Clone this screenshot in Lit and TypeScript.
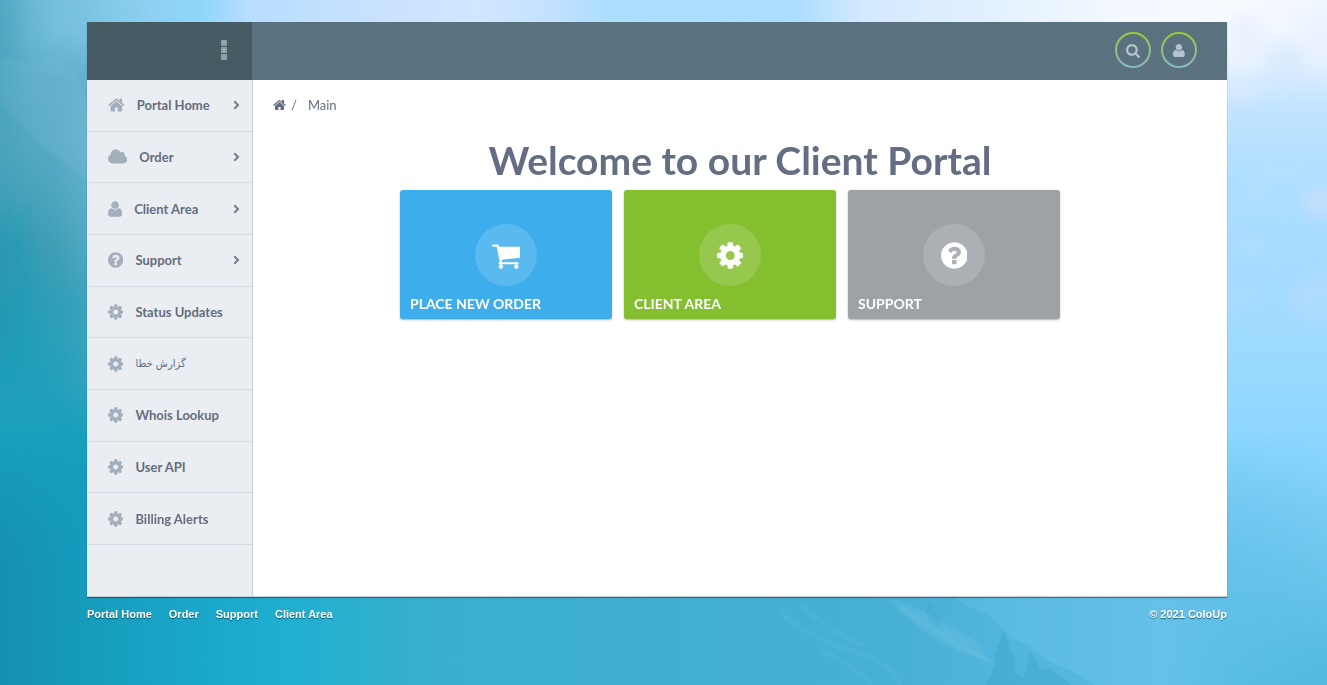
import { LitElement, html, css, svg } from "lit";
import { customElement } from "lit/decorators.js";

interface Glyph {
  box: string;
  ratio: number;
  path: string;
}

const glyph = (x: number, width: number, path: string): Glyph => ({
  box: `${x} 0 ${width} 1792`,
  ratio: width / 1792,
  path,
});

const GLYPHS: Record<string, Glyph> = {
  home: glyph(64, 1664, "M1472 992v480q0 26-19 45t-45 19h-384v-384h-256v384h-384q-26 0-45-19t-19-45v-480q0-1 .5-3t.5-3l575-474 575 474q1 2 1 6zm223-69l-62 74q-8 9-21 11h-3q-13 0-21-7l-692-577-692 577q-12 8-24 7-13-2-21-11l-62-74q-8-10-7-23.5t11-21.5l719-599q32-26 76-26t76 26l244 204v-195q0-14 9-23t23-9h192q14 0 23 9t9 23v408l219 182q10 8 11 21.5t-7 23.5z"),
  cloud: glyph(64, 1920, "M1984 1152q0 159-112.5 271.5t-271.5 112.5h-1088q-185 0-316.5-131.5t-131.5-316.5q0-132 71-241.5t187-163.5q-2-28-2-43 0-212 150-362t362-150q158 0 286.5 88t187.5 230q70-62 166-62 106 0 181 75t75 181q0 75-41 138 129 30 213 134.5t84 239.5z"),
  user: glyph(192, 1408, "M1600 1405q0 120-73 189.5t-194 69.5h-874q-121 0-194-69.5t-73-189.5q0-53 3.5-103.5t14-109 26.5-108.5 43-97.5 62-81 85.5-53.5 111.5-20q9 0 42 21.5t74.5 48 108 48 133.5 21.5 133.5-21.5 108-48 74.5-48 42-21.5q61 0 111.5 20t85.5 53.5 62 81 43 97.5 26.5 108.5 14 109 3.5 103.5zm-320-893q0 159-112.5 271.5t-271.5 112.5-271.5-112.5-112.5-271.5 112.5-271.5 271.5-112.5 271.5 112.5 112.5 271.5z"),
  question: glyph(128, 1536, "M1024 1376v-192q0-14-9-23t-23-9h-192q-14 0-23 9t-9 23v192q0 14 9 23t23 9h192q14 0 23-9t9-23zm256-672q0-88-55.5-163t-138.5-116-170-41q-243 0-371 213-15 24 8 42l132 100q7 6 19 6 16 0 25-12 53-68 86-92 34-24 86-24 48 0 85.5 26t37.5 59q0 38-20 61t-68 45q-63 28-115.5 86.5t-52.5 125.5v36q0 14 9 23t23 9h192q14 0 23-9t9-23q0-19 21.5-49.5t54.5-49.5q32-18 49-28.5t46-35 44.5-48 28-60.5 12.5-81zm384 192q0 209-103 385.5t-279.5 279.5-385.5 103-385.5-103-279.5-279.5-103-385.5 103-385.5 279.5-279.5 385.5-103 385.5 103 279.5 279.5 103 385.5z"),
  cog: glyph(128, 1536, "M1152 896q0-106-75-181t-181-75-181 75-75 181 75 181 181 75 181-75 75-181zm512-109v222q0 12-8 23t-20 13l-185 28q-19 54-39 91 35 50 107 138 10 12 10 25t-9 23q-27 37-99 108t-94 71q-12 0-26-9l-138-108q-44 23-91 38-16 136-29 186-7 28-36 28h-222q-14 0-24.5-8.5t-11.5-21.5l-28-184q-49-16-90-37l-141 107q-10 9-25 9-14 0-25-11-126-114-165-168-7-10-7-23 0-12 8-23 15-21 51-66.5t54-70.5q-27-50-41-99l-183-27q-13-2-21-12.5t-8-23.5v-222q0-12 8-23t19-13l186-28q14-46 39-92-40-57-107-138-10-12-10-24 0-10 9-23 26-36 98.5-107.5t94.5-71.5q13 0 26 10l138 107q44-23 91-38 16-136 29-186 7-28 36-28h222q14 0 24.5 8.5t11.5 21.5l28 184q49 16 90 37l142-107q9-9 24-9 13 0 25 10 129 119 165 170 7 8 7 22 0 12-8 23-15 21-51 66.5t-54 70.5q26 50 41 98l183 28q13 2 21 12.5t8 23.5z"),
  cart: glyph(64, 1664, "M704 1536q0 52-38 90t-90 38-90-38-38-90 38-90 90-38 90 38 38 90zm896 0q0 52-38 90t-90 38-90-38-38-90 38-90 90-38 90 38 38 90zm128-1088v512q0 24-16.5 42.5t-40.5 21.5l-1044 122q13 60 13 70 0 16-24 64h920q26 0 45 19t19 45-19 45-45 19h-1024q-26 0-45-19t-19-45q0-11 8-31.5t16-36 21.5-40 15.5-29.5l-177-823h-204q-26 0-45-19t-19-45 19-45 45-19h256q16 0 28.5 6.5t19.5 15.5 13 24.5 8 26 5.5 29.5 4.5 26h1201q26 0 45 19t19 45z"),
  search: glyph(64, 1664, "M1216 832q0-185-131.5-316.5t-316.5-131.5-316.5 131.5-131.5 316.5 131.5 316.5 316.5 131.5 316.5-131.5 131.5-316.5zm512 832q0 52-38 90t-90 38q-54 0-90-38l-343-342q-179 124-399 124-143 0-273.5-55.5t-225-150-150-225-55.5-273.5 55.5-273.5 150-225 225-150 273.5-55.5 273.5 55.5 225 150 150 225 55.5 273.5q0 220-124 399l343 343q37 37 37 90z"),
};

const icon = (name: string, size: number) => {
  const g = GLYPHS[name];
  return html`<svg class="icon" viewBox=${g.box} width=${g.ratio * size} height=${size} aria-hidden="true">
    <path d=${g.path}></path>
  </svg>`;
};

@customElement("sky-backdrop")
export class SkyBackdrop extends LitElement {
  static styles = css`
    :host { display: block; overflow: hidden; }
    .sky { display: block; width: 100%; height: 100%; }
  `;

  private stops(list: [number, string, number?][]) {
    return list.map(([o, c, a]) => svg`<stop offset=${o} stop-color=${c} stop-opacity=${a ?? 1}></stop>`);
  }

  render() {
    return html`
      <svg class="sky" viewBox="0 0 1327 685" preserveAspectRatio="none" aria-hidden="true">
        <defs>
          <linearGradient id="base" x2="0" y2="1">
            ${this.stops([[0, "#f2f8ff"], [0.09, "#e3f1ff"], [0.15, "#c3e4ff"], [0.27, "#addeff"], [0.48, "#a0daff"], [0.64, "#8cd7ff"], [0.74, "#7bcdf5"], [0.86, "#67c3e9"], [1, "#52b9e0"]])}
          </linearGradient>
          <linearGradient id="left" x2="0" y2="1">
            ${this.stops([[0, "#65b4d1"], [0.2, "#57aac5"], [0.36, "#3b9db5"], [0.5, "#279fb9"], [0.64, "#19a0be"], [0.8, "#169bbc"], [1, "#1597b9"]])}
          </linearGradient>
          <linearGradient id="leftFade">
            ${this.stops([[0, "#ffffff"], [0.35, "#ffffff"], [0.95, "#ffffff", 0]])}
          </linearGradient>
          <mask id="leftMask"><rect width="260" height="685" fill="url(#leftFade)"></rect></mask>
          <linearGradient id="ground">
            ${this.stops([[0, "#1590b4"], [0.07, "#169cbd"], [0.16, "#1aa9cb"], [0.22, "#20afd0"], [0.33, "#3aafcd"], [0.5, "#40afd1"], [0.66, "#4bb3d7"], [0.76, "#5cbbe2"], [0.88, "#64c1e9"], [1, "#5bbfe6", 0]])}
          </linearGradient>
          <linearGradient id="groundFade" x2="0" y2="1">
            ${this.stops([[0, "#ffffff", 0], [0.55, "#ffffff"]])}
          </linearGradient>
          <mask id="groundMask"><rect y="430" width="1327" height="255" fill="url(#groundFade)"></rect></mask>
          <linearGradient id="top">
            ${this.stops([[0, "#8fd2f2", 0], [0.06, "#82c9e8", 0.7], [0.15, "#8fd5fb"], [0.19, "#b9deff"], [0.28, "#c8e1ff"], [0.36, "#d1e6ff"], [0.42, "#c1e1ff"], [0.46, "#abdeff"], [0.6, "#abddff"], [0.65, "#d3e9ff"], [0.75, "#e3f1ff"], [0.84, "#f3f8ff"], [0.94, "#f9faff", 0.8], [1, "#eef5ff", 0.5]])}
          </linearGradient>
          <linearGradient id="topFade" x2="0" y2="1">
            ${this.stops([[0, "#ffffff"], [0.4, "#ffffff"], [1, "#ffffff", 0]])}
          </linearGradient>
          <mask id="topMask"><rect width="1327" height="80" fill="url(#topFade)"></rect></mask>
          <linearGradient id="slope">
            ${this.stops([[0, "#2c9ec8", 0], [0.6, "#2c9ec8"], [1, "#2c9ec8"]])}
          </linearGradient>
          <filter id="soft" x="-50%" y="-50%" width="200%" height="200%"><feGaussianBlur stdDeviation="7"></feGaussianBlur></filter>
          <filter id="haze" x="-80%" y="-50%" width="260%" height="200%"><feGaussianBlur stdDeviation="18"></feGaussianBlur></filter>
          <filter id="veil" x="-20%" y="-20%" width="140%" height="140%"><feGaussianBlur stdDeviation="1.5"></feGaussianBlur></filter>
        </defs>
        <rect width="1327" height="685" fill="url(#base)"></rect>
        <rect width="260" height="685" fill="url(#left)" mask="url(#leftMask)"></rect>
        <rect width="1327" height="80" fill="url(#top)" mask="url(#topMask)"></rect>
        <g filter="url(#haze)">
          <ellipse cx="-4" cy="60" rx="16" ry="170" fill="#3898b2" opacity="0.7"></ellipse>
          <ellipse cx="-6" cy="290" rx="24" ry="90" fill="#0d93ad" opacity="0.6"></ellipse>
          <ellipse cx="96" cy="180" rx="28" ry="120" fill="#82c1e0" opacity="0.4"></ellipse>
          <ellipse cx="96" cy="350" rx="22" ry="60" fill="#5fadca" opacity="0.4"></ellipse>
        </g>
        <path d="M0 56Q22 66 44 60T82 84L90 118V180Q40 150 0 100Z" fill="#8bc6e2" opacity="0.14" filter="url(#veil)"></path>
        <rect y="430" width="1327" height="255" fill="url(#ground)" mask="url(#groundMask)"></rect>
        <g filter="url(#soft)" fill="#e9f0ff">
          <ellipse cx="1246" cy="36" rx="20" ry="24" opacity="0.8"></ellipse>
          <ellipse cx="1320" cy="44" rx="14" ry="18" opacity="0.7"></ellipse>
          <ellipse cx="1284" cy="62" rx="22" ry="20" fill="#cfe6fd" opacity="0.5"></ellipse>
          <ellipse cx="1240" cy="92" rx="24" ry="10" opacity="0.4"></ellipse>
          <ellipse cx="1280" cy="172" rx="34" ry="6" fill="#bcdffd" opacity="0.7"></ellipse>
          <ellipse cx="1256" cy="192" rx="10" ry="8" fill="#c4e0fd" opacity="0.7"></ellipse>
          <ellipse cx="1322" cy="202" rx="22" ry="16" fill="#c4dffd" opacity="0.9"></ellipse>
          <ellipse cx="1252" cy="248" rx="12" ry="5" fill="#bfe0fd" opacity="0.7"></ellipse>
          <ellipse cx="1322" cy="298" rx="34" ry="26" fill="#b0dbff" opacity="0.8"></ellipse>
          <ellipse cx="1238" cy="296" rx="24" ry="14" fill="#acdcff" opacity="0.6"></ellipse>
          <ellipse cx="1270" cy="424" rx="44" ry="8" fill="#93d9ff" opacity="0.5"></ellipse>
        </g>
        <path d="M700 590H945L968 607L988 614L1012 638L1030 646L1050 662L1072 671L1096 685H700Z" fill="url(#slope)" opacity="0.2"></path>
        <path d="M885 597L925 612L948 626L975 640L990 662L960 652L925 632Z" fill="#9ed8ee" opacity="0.16" filter="url(#veil)"></path>
        <path d="M1003 631L1006 638L1009 642L1011 652L1015 660L1014 672L1024 678L1030 652L1036 658L1040 670L1050 668L1072 685H986L996 664L994 656L998 646Z" fill="#2a98c0" opacity="0.22"></path>
        <path d="M931 602L935 612L942 624L938 628L930 620L926 612Z" fill="#2a98c0" opacity="0.12"></path>
        <path d="M780 612Q812 640 850 650T900 685M800 605Q830 632 866 646M820 650Q850 662 872 685M900 608Q940 635 990 662" fill="none" stroke="#86cde6" stroke-width="3" opacity="0.16" filter="url(#veil)"></path>
      </svg>
    `;
  }
}

interface MenuItem {
  label: string;
  icon: string;
  more?: boolean;
  lang?: string;
}

const MENU: MenuItem[] = [
  { label: "Portal Home", icon: "home", more: true },
  { label: "Order", icon: "cloud", more: true },
  { label: "Client Area", icon: "user", more: true },
  { label: "Support", icon: "question", more: true },
  { label: "Status Updates", icon: "cog" },
  { label: "گزارش خطا", icon: "cog", lang: "fa" },
  { label: "Whois Lookup", icon: "cog" },
  { label: "User API", icon: "cog" },
  { label: "Billing Alerts", icon: "cog" },
];

const TILES = [
  { label: "PLACE NEW ORDER", icon: "cart", tone: "blue" },
  { label: "CLIENT AREA", icon: "cog", tone: "green" },
  { label: "SUPPORT", icon: "question", tone: "gray" },
];

const FOOTER = ["Portal Home", "Order", "Support", "Client Area"];

@customElement("app-root")
export class AppRoot extends LitElement {
  static styles = css`
    :host {
      display: grid;
      min-height: 100vh;
      font-family: Lato, "Liberation Sans", "DejaVu Sans", sans-serif;
      color: #656d82;
    }
    * { box-sizing: border-box; }
    a { color: inherit; text-decoration: none; }
    button { border: 0; margin: 0; padding: 0; background: none; font: inherit; cursor: pointer; }
    .icon { display: block; fill: currentColor; flex: none; }
    .backdrop, .page { grid-area: 1 / 1; min-width: 0; }
    .page { position: relative; padding: 22px 13px 0 0; }
    .container { max-width: 1140px; margin: 0 auto; }
    .panel {
      display: grid;
      grid-template-columns: 166px 1fr;
      grid-template-rows: 58px auto;
      background: #ffffff;
      border-bottom: 1px solid #c3ccd4;
      box-shadow: 0 1px 1px rgba(0, 0, 0, 0.35);
    }
    .brand, .topbar {
      display: flex;
      align-items: center;
      justify-content: flex-end;
      padding-bottom: 2px;
    }
    .brand {
      padding-right: 25px;
      background: #475b64;
      border-right: 1px solid #5a727f;
    }
    .toggle { display: grid; gap: 1px; }
    .dot { width: 6px; height: 6px; border-radius: 1px; background: #93a1a8; }
    .topbar {
      gap: 10px;
      padding-right: 30px;
      background: #5a727f;
    }
    .round {
      display: grid;
      place-items: center;
      width: 36px;
      height: 36px;
      border: 2px solid transparent;
      border-radius: 50%;
      color: #b4c4ce;
      background:
        linear-gradient(#5a727f, #5a727f) padding-box,
        linear-gradient(#94cf33, #8ab8c8) border-box;
    }
    .sidebar { background: #eaeef3; border-right: 1px solid #c9d1d8; min-height: 516px; }
    .menu {
      display: grid;
      grid-auto-rows: 1fr;
      height: 465px;
      margin: 0;
      padding: 0;
      list-style: none;
    }
    .item { border-bottom: 1px solid #d5dbe0; }
    .link {
      display: flex;
      align-items: center;
      gap: 12px;
      height: 100%;
      padding: 0 12px 0 21px;
      font-size: 13px;
      line-height: 20px;
      font-weight: 700;
      color: #656d7d;
    }
    .link .icon { color: #a3afbb; }
    .label { flex: 1; white-space: nowrap; }
    .persian { font-family: "DejaVu Sans Condensed", "DejaVu Sans", sans-serif; font-size: 11px; font-weight: 400; }
    .link .chevron { fill: none; stroke: #7a7d85; stroke-width: 2; }
    .main { padding: 15px 20px 0; }
    .crumbs { display: flex; align-items: center; gap: 5px; font-size: 13px; line-height: 20px; }
    .current { margin-left: 6px; }
    .title {
      margin: 21px 0 6px;
      font-size: 39px;
      line-height: 48px;
      font-weight: 700;
      text-align: center;
    }
    .tiles { display: flex; flex-wrap: wrap; justify-content: center; gap: 12px; padding: 0 20px 40px 0; }
    .tile {
      display: flex;
      flex-direction: column;
      align-items: center;
      width: 212px;
      padding: 34px 10px 5px;
      border-radius: 3px;
      color: #ffffff;
      box-shadow: 0 1px 2px rgba(0, 0, 0, 0.3);
    }
    .blue { background: #3eadeb; }
    .green { background: #84bf30; }
    .gray { background: #9ea1a6; }
    .disc {
      display: grid;
      place-items: center;
      width: 62px;
      height: 62px;
      border-radius: 50%;
      background: rgba(255, 255, 255, 0.15);
    }
    .caption { align-self: stretch; margin-top: 8px; font-size: 14px; line-height: 20px; font-weight: 700; }
    .footer {
      display: flex;
      justify-content: space-between;
      padding: 9px 0;
      font-family: "Liberation Sans", Arial, sans-serif;
      font-size: 11px;
      line-height: 16px;
      font-weight: 700;
      color: #ffffff;
      text-shadow: 0 1px 1px rgba(0, 0, 0, 0.5);
    }
    .links { display: flex; gap: 17px; }
  `;

  render() {
    return html`
      <sky-backdrop class="backdrop"></sky-backdrop>
      <div class="page">
        <div class="container">
          <div class="panel">
            <div class="brand">
              <button class="toggle" aria-label="Toggle menu">
                <span class="dot"></span><span class="dot"></span><span class="dot"></span>
              </button>
            </div>
            <header class="topbar">
              <button class="round" aria-label="Search">${icon("search", 15)}</button>
              <button class="round" aria-label="Account">${icon("user", 15)}</button>
            </header>
            <nav class="sidebar" aria-label="Portal">
              <ul class="menu">
                ${MENU.map(
                  (m) => html`<li class="item">
                    <a class="link" href="#">
                      ${icon(m.icon, 18)}
                      <span class="label ${m.lang ? "persian" : ""}" lang=${m.lang ?? "en"}>${m.label}</span>
                      ${m.more
                        ? html`<svg class="icon chevron" viewBox="0 0 7 10" width="7" height="10" aria-hidden="true">
                            <path d="M1.3 1.3L5 5L1.3 8.7"></path>
                          </svg>`
                        : ""}
                    </a>
                  </li>`
                )}
              </ul>
            </nav>
            <main class="main">
              <nav class="crumbs" aria-label="Breadcrumb">
                <a href="#" aria-label="Home">${icon("home", 14)}</a>
                <span>/</span>
                <span class="current">Main</span>
              </nav>
              <h1 class="title">Welcome to our Client Portal</h1>
              <div class="tiles">
                ${TILES.map(
                  (t) => html`<a class="tile ${t.tone}" href="#">
                    <span class="disc">${icon(t.icon, 31)}</span>
                    <span class="caption">${t.label}</span>
                  </a>`
                )}
              </div>
            </main>
          </div>
          <footer class="footer">
            <nav class="links" aria-label="Footer">${FOOTER.map((f) => html`<a href="#">${f}</a>`)}</nav>
            <span>© 2021 ColoUp</span>
          </footer>
        </div>
      </div>
    `;
  }
}
